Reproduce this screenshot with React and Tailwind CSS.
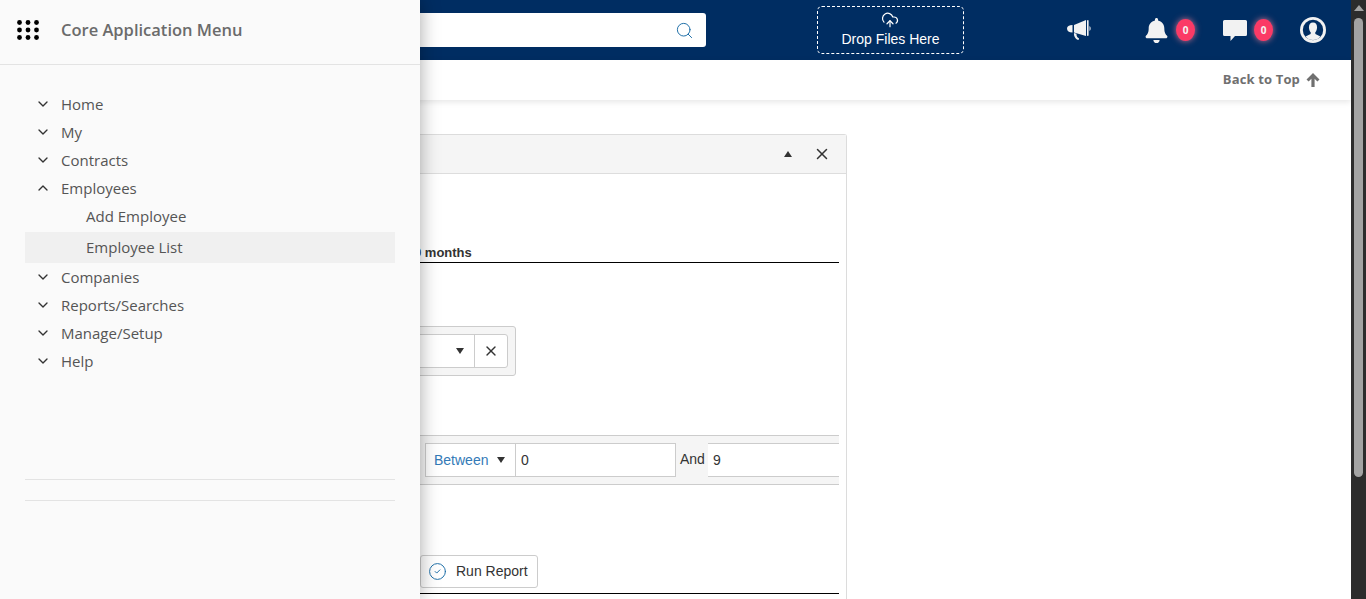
import React from 'react'
import { ChevronDown, ChevronUp, CircleCheck, CloudUpload, Search, X } from 'lucide-react'
import { FaBell } from 'react-icons/fa'

const menuTop = ['Home', 'My', 'Contracts']
const menuBottom = ['Companies', 'Reports/Searches', 'Manage/Setup', 'Help']

const DotsIcon = () => (
    <svg width="22" height="20" viewBox="0 0 22 20" className="fill-black">
        {[2.5, 11, 19.5].map((x) =>
            [2.5, 10, 17.5].map((y) => <circle key={`${x}-${y}`} cx={x} cy={y} r="2.4" />)
        )}
    </svg>
)

const MegaphoneIcon = () => (
    <svg width="26" height="22" viewBox="0 0 26 22" className="fill-[#f2f2f2]">
        <path d="M20 1 L20 17 L8 13.5 L8 6 Z" />
        <rect x="21" y="1" width="1.6" height="16" rx="0.8" />
        <path d="M1 9.5 C1 7.5 3 6 6.5 6 L6.5 13.5 C3 13.5 1 12 1 9.5 Z" />
        <path d="M23.5 7 C25 8 25 11 23.5 12 Z" />
        <path d="M8 14 L10.5 14.8 C10.2 17 11.5 18.8 13 19.3 L12.6 21 C9.8 20.4 7.6 17.5 8 14 Z" />
    </svg>
)

const ChatIcon = () => (
    <svg width="24" height="21" viewBox="0 0 24 21" className="fill-[#f2f2f2]">
        <path d="M1.5 0 H22.5 A1.5 1.5 0 0 1 24 1.5 V14.5 A1.5 1.5 0 0 1 22.5 16 H12 L7.5 21 L7.5 16 H1.5 A1.5 1.5 0 0 1 0 14.5 V1.5 A1.5 1.5 0 0 1 1.5 0 Z" />
    </svg>
)

const UserIcon = () => (
    <svg width="26" height="26" viewBox="0 0 26 26">
        <circle cx="13" cy="13" r="13" className="fill-[#f2f2f2]" />
        <circle cx="13" cy="13" r="10.2" className="fill-[#002d62]" />
        <path
            d="M13 5.5 C16 5.5 17.3 8 17 11 C16.8 13 16 14.6 15.2 15.5 L15.4 17 C17.5 18 19.5 18.8 20.4 19.8 A10.2 10.2 0 0 1 5.6 19.8 C6.5 18.8 8.5 18 10.6 17 L10.8 15.5 C10 14.6 9.2 13 9 11 C8.7 8 10 5.5 13 5.5 Z"
            className="fill-[#f2f2f2]"
        />
    </svg>
)

const ArrowUpIcon = () => (
    <svg width="14" height="14" viewBox="0 0 14 14" className="fill-[#707070] ml-[6px]">
        <path d="M7 0 L13.5 6.6 L11.4 8.6 L8.6 5.8 L8.6 14 L5.4 14 L5.4 5.8 L2.6 8.6 L0.5 6.6 Z" />
    </svg>
)

const Badge = () => (
    <div className="w-[19px] h-[22px] rounded-[50%] bg-[#fb3a66] shadow-[0_0_6px_rgba(255,130,150,0.8)] flex items-center justify-center text-[10px] font-bold text-[#f4f4f4] font-['Open_Sans',sans-serif]">
        0
    </div>
)

const MenuRow = ({ label, open }) => (
    <div className="h-[28px] flex items-center pl-[35px]">
        {open ? (
            <ChevronUp size={16} strokeWidth={2} className="text-[#333] mr-[10px]" />
        ) : (
            <ChevronDown size={16} strokeWidth={2} className="text-[#333] mr-[10px]" />
        )}
        <span>{label}</span>
    </div>
)

const Sidebar = () => (
    <div className="absolute left-0 top-0 z-10 w-[420px] h-full bg-[#fafafa] shadow-[0_0_18px_rgba(0,0,0,0.35)] font-['Open_Sans',sans-serif] text-[15px] text-[#555]">
        <div className="h-[65px] border-b border-[#e3e3e3] flex items-center pl-[17px]">
            <div className="mb-[4px]">
                <DotsIcon />
            </div>
            <span className="ml-[22px] mb-[4px] text-[16.5px] font-semibold text-[#6b6b6b]">Core Application Menu</span>
        </div>
        <div className="pt-[25px]">
            {menuTop.map((m) => (
                <MenuRow key={m} label={m} />
            ))}
            <MenuRow label="Employees" open />
            <div className="h-[28px] flex items-center pl-[86px]">Add Employee</div>
            <div className="h-[31px] mt-[2px] mx-[25px] pl-[61px] flex items-center bg-[#f0f0f0]">Employee List</div>
            {menuBottom.map((m) => (
                <MenuRow key={m} label={m} />
            ))}
        </div>
        <div className="mt-[104px] mx-[25px] h-[22px] border-y border-[#e3e3e3]" />
    </div>
)

const Header = () => (
    <div className="h-[60px] bg-[#002d62] flex items-center pl-[300px] shrink-0">
        <div className="w-[406px] h-[34px] bg-white rounded-[3px] flex items-center justify-end pr-[12px]">
            <Search size={19} strokeWidth={1.25} className="text-[#1f6fa8]" />
        </div>
        <div className="ml-[111px] w-[147px] h-[48px] rounded-[5px] border border-dashed border-white flex flex-col items-center justify-center text-white text-[14px] font-['Liberation_Sans',sans-serif]">
            <CloudUpload size={18} strokeWidth={1.6} className="-ml-[1px] -mt-[1px] mb-[1px]" />
            <span className="leading-[18px]">Drop Files Here</span>
        </div>
        <div className="ml-[102px] w-[26px] h-[22px] mb-[1px]">
            <MegaphoneIcon />
        </div>
        <div className="ml-[52px]">
            <FaBell size={25} className="text-[#f2f2f2]" />
        </div>
        <div className="ml-[7px]">
            <Badge />
        </div>
        <div className="ml-[28px]">
            <ChatIcon />
        </div>
        <div className="ml-[7px]">
            <Badge />
        </div>
        <div className="ml-[27px]">
            <UserIcon />
        </div>
    </div>
)

const Panel = () => (
    <div className="ml-[300px] mt-[34px] w-[547px] border-x border-t border-[#dcdcdc] rounded-t-[3px] font-['Liberation_Sans',sans-serif] text-[14px] text-[#333]">
        <div className="h-[39px] bg-[#f5f5f5] border-b border-[#dddddd] flex items-center justify-end pr-[15px]">
            <span className="w-0 h-0 border-x-[4px] border-x-transparent border-b-[6px] border-b-[#333] mr-[21px]" />
            <X size={18} strokeWidth={2} className="text-[#333]" />
        </div>
        <div className="px-[7px] pb-[20px]">
            <div className="mt-[70px] h-[19px] border-b border-black pl-[106px] text-[13px] font-bold leading-[18px]">
                9 months
            </div>
            <div className="mt-[63px] w-[208px] h-[50px] bg-[#f5f5f5] border border-[#cccccc] rounded-[3px] py-[7px] pr-[7px]">
                <div className="h-[34px] bg-white border border-[#cccccc] rounded-[3px] flex items-center justify-end">
                    <span className="w-0 h-0 border-x-[4px] border-x-transparent border-t-[6px] border-t-[#333] mr-[10px]" />
                    <div className="w-[33px] h-full border-l border-[#cccccc] flex items-center justify-center">
                        <X size={16} strokeWidth={2} className="text-[#333]" />
                    </div>
                </div>
            </div>
            <div className="mt-[59px] h-[50px] bg-[#f5f5f5] border-y border-[#cccccc] py-[7px] flex">
                <div className="w-[117px]" />
                <div className="w-[91px] h-[34px] bg-white border border-[#cccccc] flex items-center pl-[8px] text-[#337ab7]">
                    Between
                    <span className="ml-[9px] w-0 h-0 border-x-[4px] border-x-transparent border-t-[6px] border-t-[#333]" />
                </div>
                <div className="w-[160px] h-[34px] bg-white border-y border-r border-[#cccccc] flex items-center pl-[5px]">0</div>
                <div className="w-[32px] h-[34px] flex items-center pl-[4px] pb-[2px]">And</div>
                <div className="flex-1 h-[34px] bg-white border-y border-[#cccccc] flex items-center pl-[5px]">9</div>
            </div>
            <div className="mt-[70px] ml-[112px] w-[118px] h-[33px] bg-white border border-[#cccccc] rounded-[3px] flex items-center pl-[7px]">
                <CircleCheck size={19} strokeWidth={1.25} className="text-[#1f6fa8]" />
                <span className="ml-[9px]">Run Report</span>
            </div>
            <div className="mt-[5px] border-b border-black" />
        </div>
    </div>
)

const Scrollbar = () => (
    <div className="w-[15px] h-full bg-[#2c2c2c] shrink-0 flex flex-col items-center">
        <span className="mt-[5px] w-0 h-0 border-x-[5px] border-x-transparent border-b-[6px] border-b-[#a3a3a3]" />
        <div className="mt-[7px] w-[9px] h-[459px] rounded-full bg-[#a3a3a3]" />
    </div>
)

const App = () => {
    return (
        <div className="relative w-[1366px] h-[599px] overflow-hidden bg-white flex">
            <Sidebar />
            <div className="flex-1 min-w-0 h-full overflow-hidden">
                <Header />
                <div className="h-[40px] bg-white shadow-[0_2px_6px_rgba(0,0,0,0.1)] flex items-center justify-end pr-[31px] text-[13px] tracking-[0.15px] font-bold text-[#707070] font-['Open_Sans',sans-serif]">
                    Back to Top
                    <ArrowUpIcon />
                </div>
                <Panel />
            </div>
            <Scrollbar />
        </div>
    )
}

export default App
